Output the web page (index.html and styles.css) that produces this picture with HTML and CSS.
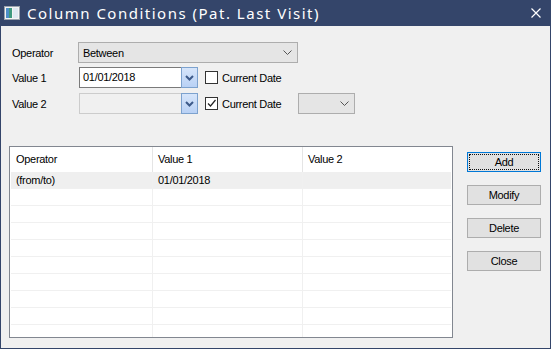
FILE: index.html
```html
<!DOCTYPE html>
<html lang="en">
<head>
    <meta charset="utf-8">
    <link rel="stylesheet" href="styles.css">
</head>
<body>
<div class="window">
    <div class="titlebar">
        <svg class="app-icon" width="16" height="14" viewBox="0 0 16 14">
            <rect x="0.5" y="0.5" width="15" height="13" fill="#f4f4f4" stroke="#9aa3ad"/>
            <rect x="2" y="2" width="6" height="10" fill="#3f9a7e"/>
            <rect x="2" y="2" width="3" height="10" fill="#4d8fc9"/>
            <rect x="9" y="2" width="5" height="10" fill="#dfe9f2"/>
        </svg>
        <div class="title">Column Conditions (Pat. Last Visit)</div>
        <svg class="close" width="10" height="10" viewBox="0 0 10 10">
            <path d="M0.5 0.5 L9.5 9.5 M9.5 0.5 L0.5 9.5" stroke="#ffffff" stroke-width="1.2"/>
        </svg>
    </div>

    <div class="content">
        <div class="form">
            <div class="form-row row-op">
                <label class="field-label">Operator</label>
                <div class="select select-op">
                    <span>Between</span>
                    <svg class="chev" width="9" height="5" viewBox="0 0 9 5"><path d="M0.5 0.5 L4.5 4.5 L8.5 0.5" fill="none" stroke="#555" stroke-width="1"/></svg>
                </div>
            </div>
            <div class="form-row row-v1">
                <label class="field-label">Value 1</label>
                <div class="datebox">
                    <div class="date-input">01/01/2018</div>
                    <div class="drop-btn">
                        <svg width="9" height="6" viewBox="0 0 9 6"><path d="M1 1 L4.5 4.5 L8 1" fill="none" stroke="#3d5a8a" stroke-width="2"/></svg>
                    </div>
                </div>
                <div class="check"><span class="box"></span>Current Date</div>
            </div>
            <div class="form-row row-v2">
                <label class="field-label">Value 2</label>
                <div class="datebox disabled">
                    <div class="date-input"></div>
                    <div class="drop-btn">
                        <svg width="9" height="6" viewBox="0 0 9 6"><path d="M1 1 L4.5 4.5 L8 1" fill="none" stroke="#3d5a8a" stroke-width="2"/></svg>
                    </div>
                </div>
                <div class="check">
                    <span class="box">
                        <svg width="11" height="11" viewBox="0 0 11 11"><path d="M2 5.5 L4.5 8 L9.5 2" fill="none" stroke="#222" stroke-width="1.2"/></svg>
                    </span>Current Date
                </div>
                <div class="select select-small">
                    <span></span>
                    <svg class="chev" width="9" height="5" viewBox="0 0 9 5"><path d="M0.5 0.5 L4.5 4.5 L8.5 0.5" fill="none" stroke="#555" stroke-width="1"/></svg>
                </div>
            </div>
        </div>

        <div class="lower">
            <div class="listbox">
                <div class="list-head">
                    <div class="cell">Operator</div>
                    <div class="cell">Value 1</div>
                    <div class="cell">Value 2</div>
                </div>
                <div class="list-rows" id="list-rows"></div>
            </div>
            <div class="buttons">
                <button class="btn btn-default"><span>Add</span></button>
                <button class="btn"><span>Modify</span></button>
                <button class="btn"><span>Delete</span></button>
                <button class="btn"><span>Close</span></button>
            </div>
        </div>
    </div>
</div>
<script>
const conditions = [
    { operator: "(from/to)", value1: "01/01/2018", value2: "" }
];

const rowsEl = document.getElementById('list-rows');
for (let i = 0; i < 10; i++) {
    const item = conditions[i];
    const row = document.createElement('div');
    row.className = 'list-row' + (item ? ' filled' : '');
    ['operator', 'value1', 'value2'].forEach((key) => {
        const cell = document.createElement('div');
        cell.className = 'cell';
        cell.textContent = item ? item[key] : '';
        row.appendChild(cell);
    });
    rowsEl.appendChild(row);
}
</script>
</body>
</html>
```

FILE: styles.css
```css
body {
    margin: 0;
    padding: 0;
    font-family: "Liberation Sans", Arial, sans-serif;
    font-size: 11px;
    letter-spacing: -0.3px;
    color: #000;
    background: #ffffff;
}

.window {
    width: 551px;
    height: 349px;
    box-sizing: border-box;
    background-color: #f0f0f0;
    border: 1px solid #34456a;
    border-top: none;
    display: flex;
    flex-direction: column;
    overflow: hidden;
}

.titlebar {
    height: 26px;
    flex: none;
    background-color: #34456a;
    display: flex;
    align-items: center;
    color: #fff;
    padding: 0 0 0 3px;
}

.app-icon {
    margin-right: 7px;
}

.title {
    flex: 1;
    font-family: "Noto Sans", sans-serif;
    font-size: 15px;
    letter-spacing: 1.5px;
}

.close {
    margin-right: 9px;
}

.content {
    flex: 1;
    display: flex;
    flex-direction: column;
    padding: 16px 0 0 8px;
}

/* form */
.form-row {
    display: flex;
    align-items: center;
    height: 21px;
}

.row-v1 {
    margin-top: 4px;
}

.row-v2 {
    margin-top: 5px;
}

.field-label {
    width: 66px;
    padding-left: 3px;
}

.select {
    box-sizing: border-box;
    height: 21px;
    background-color: #e5e5e5;
    border: 1px solid #adadad;
    display: flex;
    align-items: center;
    justify-content: space-between;
    padding: 0 5px 0 4px;
}

.select-op {
    width: 220px;
}

.select-small {
    width: 57px;
    margin-left: 17px;
}

.chev {
    flex: none;
}

.datebox {
    display: flex;
    height: 21px;
    width: 119px;
    margin-left: 1px;
    box-sizing: border-box;
}

.date-input {
    flex: 1;
    box-sizing: border-box;
    border: 1px solid #7a7a7a;
    border-right: none;
    background: #fff;
    padding-left: 3px;
    line-height: 19px;
}

.drop-btn {
    width: 17px;
    box-sizing: border-box;
    border: 1px solid #7da2ce;
    background: linear-gradient(#d6e5fa, #b9d1f5);
    display: flex;
    align-items: center;
    justify-content: center;
}

.datebox.disabled .date-input {
    background: #f0f0f0;
    border-color: #cccccc;
}

.check {
    display: flex;
    align-items: center;
    margin-left: 7px;
}

.box {
    width: 13px;
    height: 13px;
    box-sizing: border-box;
    border: 1px solid #333;
    background: #fff;
    margin-right: 4px;
    display: flex;
    align-items: center;
    justify-content: center;
}

/* list and buttons */
.lower {
    display: flex;
    margin-top: 32px;
}

.listbox {
    width: 444px;
    height: 192px;
    box-sizing: border-box;
    border: 1px solid #828790;
    background: #fff;
    padding: 0 1px;
    overflow: hidden;
}

.list-head,
.list-row {
    display: grid;
    grid-template-columns: 142px 150px 1fr;
}

.list-head {
    height: 25px;
}

.list-head .cell {
    border-right: 1px solid #e5e5e5;
    padding-left: 5px;
    line-height: 25px;
}

.list-head .cell:last-child {
    border-right: none;
}

.list-row {
    height: 17px;
    box-sizing: border-box;
    border-bottom: 1px solid #f0f0f0;
}

.list-row .cell {
    border-right: 1px solid #f0f0f0;
    padding-left: 5px;
    line-height: 16px;
}

.list-row .cell:last-child {
    border-right: none;
}

.list-row.filled {
    background: #efefef;
}

.buttons {
    display: flex;
    flex-direction: column;
    gap: 13px;
    margin-left: 14px;
    margin-top: 6px;
}

.btn {
    width: 74px;
    height: 20px;
    box-sizing: border-box;
    background: #e1e1e1;
    border: 1px solid #adadad;
    font-family: "Liberation Sans", Arial, sans-serif;
    font-size: 11px;
    letter-spacing: -0.3px;
    padding: 1px;
    display: flex;
}

.btn span {
    flex: 1;
    display: flex;
    align-items: center;
    justify-content: center;
    border: 1px dotted transparent;
}

.btn-default {
    border-color: #0078d7;
}

.btn-default span {
    border-color: #111;
}
```
